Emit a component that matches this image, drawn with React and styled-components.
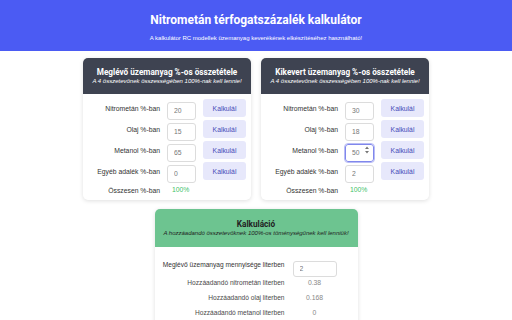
import React, { useState } from 'react'
import styled, { createGlobalStyle } from 'styled-components'

const GlobalStyle = createGlobalStyle`
  body {
    margin: 0;
    background: #ffffff;
    font-family: "Liberation Sans", Arial, sans-serif;
  }
`

const Header = styled.header`
  height: 51px;
  box-sizing: border-box;
  padding-top: 13px;
  background: #4b5bf3;
  color: #fff;
  text-align: center;
`

const Title = styled.h1`
  margin: 0;
  font-family: Roboto, "Liberation Sans", sans-serif;
  font-size: 12px;
  line-height: 14px;
  font-weight: 700;
`

const SubTitle = styled.p`
  margin: 7px 0 0;
  font-size: 6px;
  line-height: 8px;
`

const Main = styled.main`
  padding-top: 7px;
  display: flex;
  flex-direction: column;
  align-items: center;
`

const CardRow = styled.div`
  display: flex;
  gap: 10px;
`

const Card = styled.section`
  width: ${p => p.$width}px;
  background: #fff;
  border-radius: 5px;
  box-shadow: 0 1px 4px rgba(0, 0, 0, 0.13);
  overflow: hidden;
  margin-top: ${p => p.$top || 0}px;
`

const CardHead = styled.div`
  height: ${p => p.$height}px;
  box-sizing: border-box;
  padding-top: ${p => p.$pad}px;
  background: ${p => p.$bg};
  color: ${p => p.$color};
  text-align: center;
`

const CardTitle = styled.h2`
  margin: 0;
  font-family: Roboto, "Liberation Sans", sans-serif;
  font-size: 8.2px;
  line-height: 10px;
  font-weight: 700;
`

const CardNote = styled.p`
  margin: 0;
  font-size: 6px;
  line-height: 8px;
  font-style: italic;
`

const Grid = styled.div`
  display: grid;
  grid-template-columns: 1fr 29px 43px;
  column-gap: 7px;
  row-gap: 3px;
  padding: 5px 5px 3px;
  align-items: center;
`

const Label = styled.label`
  font-size: 6.8px;
  color: #333;
  text-align: right;
  white-space: nowrap;
`

const InputBox = styled.div`
  position: relative;
  height: ${p => p.$height || 18}px;
`

const Input = styled.input`
  width: 100%;
  height: 100%;
  box-sizing: border-box;
  border: 1px solid ${p => (p.$focused ? '#8087ec' : '#dcdcdc')};
  outline: ${p => (p.$focused ? '1px solid #b9bdf5' : 'none')};
  border-radius: 3px;
  padding: 0 0 0 6px;
  font-family: "Liberation Sans", Arial, sans-serif;
  font-size: 6.8px;
  color: #777;
  background: #fff;
`

const Spinner = styled.svg`
  position: absolute;
  right: 5px;
  top: 5px;
`

const Button = styled.button`
  height: 18px;
  border: none;
  border-radius: 3px;
  background: #e7e8fb;
  color: #464bb8;
  font-family: "Liberation Sans", Arial, sans-serif;
  font-size: 6.8px;
  padding: 0;
`

const Total = styled.span`
  font-size: 6.8px;
  color: #3fbf6b;
  padding-left: 5px;
  line-height: 14px;
`

const CalcGrid = styled.div`
  display: grid;
  grid-template-columns: 1fr 44px;
  column-gap: 8px;
  row-gap: 5px;
  padding: 10px 21px 10px 4px;
  align-items: center;
`

const CalcLabel = styled.span`
  font-size: 6.6px;
  color: ${p => (p.$strong ? '#333' : '#4a4a4a')};
  text-align: right;
  line-height: 10px;
  white-space: nowrap;
`

const CalcValue = styled.span`
  font-size: 6.8px;
  color: #888;
  text-align: center;
  line-height: 10px;
`

const rowsLeft = [
  ['Nitrometán %-ban', '20'],
  ['Olaj %-ban', '15'],
  ['Metanol %-ban', '65'],
  ['Egyéb adalék %-ban', '0'],
]

const rowsRight = [
  ['Nitrometán %-ban', '30'],
  ['Olaj %-ban', '18'],
  ['Metanol %-ban', '50', true],
  ['Egyéb adalék %-ban', '2'],
]

const MixCard = ({ title, rows }) => {
  const [values, setValues] = useState(rows.map(r => r[1]))
  return (
    <Card $width={168}>
      <CardHead $height={36} $pad={9} $bg="#3e4351" $color="#fff">
        <CardTitle>{title}</CardTitle>
        <CardNote>A 4 összetevőnek összességében 100%-nak kell lennie!</CardNote>
      </CardHead>
      <Grid>
        {rows.map(([label, , focused], i) => (
          <React.Fragment key={label}>
            <Label>{label}</Label>
            <InputBox>
              <Input
                $focused={focused}
                value={values[i]}
                onChange={e => setValues(values.map((v, j) => (j === i ? e.target.value : v)))}
              />
              {focused && (
                <Spinner width="4" height="8" viewBox="0 0 4 8">
                  <path d="M0 3 L2 0.5 L4 3 Z M0 5 L2 7.5 L4 5 Z" fill="#777" />
                </Spinner>
              )}
            </InputBox>
            <Button>Kalkulál</Button>
          </React.Fragment>
        ))}
        <Label>Összesen %-ban</Label>
        <Total>100%</Total>
      </Grid>
    </Card>
  )
}

const App = () => {
  const [amount, setAmount] = useState('2')
  return (
    <>
      <GlobalStyle />
      <Header>
        <Title>Nitrometán térfogatszázalék kalkulátor</Title>
        <SubTitle>A kalkulátor RC modellek üzemanyag keverékének elkészítéséhez használható!</SubTitle>
      </Header>
      <Main>
        <CardRow>
          <MixCard title="Meglévő üzemanyag %-os összetétele" rows={rowsLeft} />
          <MixCard title="Kikevert üzemanyag %-os összetétele" rows={rowsRight} />
        </CardRow>
        <Card $width={203} $top={9}>
          <CardHead $height={38} $pad={10} $bg="#6dc490" $color="#222">
            <CardTitle>Kalkuláció</CardTitle>
            <CardNote>A hozzáadandó összetevőknek 100%-os töménységűnek kell lenniük!</CardNote>
          </CardHead>
          <CalcGrid>
            <CalcLabel $strong>Meglévő üzemanyag mennyisége literben</CalcLabel>
            <InputBox $height={16}>
              <Input value={amount} onChange={e => setAmount(e.target.value)} />
            </InputBox>
            <CalcLabel>Hozzáadandó nitrometán literben</CalcLabel>
            <CalcValue>0.38</CalcValue>
            <CalcLabel>Hozzáadandó olaj literben</CalcLabel>
            <CalcValue>0.168</CalcValue>
            <CalcLabel>Hozzáadandó metanol literben</CalcLabel>
            <CalcValue>0</CalcValue>
          </CalcGrid>
        </Card>
      </Main>
    </>
  )
}

export default App
